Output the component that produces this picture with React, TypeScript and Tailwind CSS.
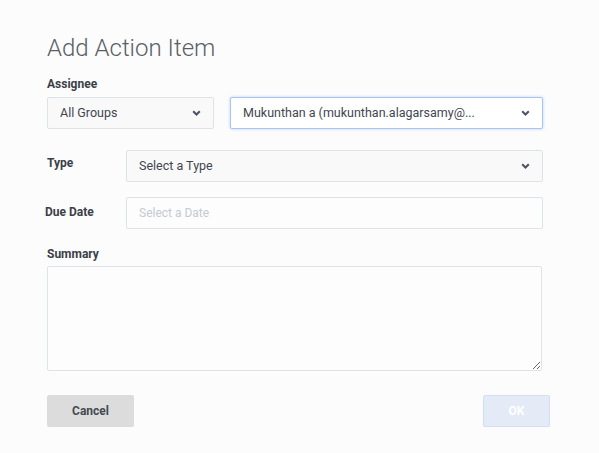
import React from "react";

function Chevron() {
  return (
    <svg width="9" height="6" viewBox="0 0 9 6" className="shrink-0">
      <polyline points="1.2,1.2 4.5,4.5 7.8,1.2" fill="none" stroke="#4a5363" strokeWidth="2" />
    </svg>
  );
}

function Select({ value, focused, className }: { value: string; focused?: boolean; className?: string }) {
  return (
    <div
      className={
        "flex h-[32px] items-center justify-between rounded-[2px] pl-[12px] pr-[12px] text-[12.5px] text-[#3f4650] " +
        (focused
          ? "border border-[#a9c4f5] bg-white shadow-[0_0_3px_rgba(120,160,240,0.5)] "
          : "border border-[#dfe3e8] bg-[#f9f9f9] ") +
        (className ?? "")
      }
    >
      <span className="truncate">{value}</span>
      <Chevron />
    </div>
  );
}

export default function App() {
  return (
    <div className="min-h-[453px] w-[599px] bg-[#fcfcfc] font-['Roboto',sans-serif]">
      <div className="w-[543px] pl-[47px] pt-[34px]">
        <h1 className="text-[24px] leading-[28px] font-light text-[#5a5f66]">Add Action Item</h1>

        <div className="mt-[15px] text-[12px] leading-[14px] font-bold text-[#3b4048]">Assignee</div>
        <div className="mt-[6px] flex gap-[16px]">
          <Select value="All Groups" className="w-[167px]" />
          <Select value="Mukunthan a (mukunthan.alagarsamy@..." focused className="flex-1" />
        </div>

        <div className="mt-[21px] flex">
          <div className="w-[79px] pt-[6px] text-[12px] leading-[14px] font-bold text-[#3b4048]">Type</div>
          <Select value="Select a Type" className="flex-1" />
        </div>

        <div className="mt-[15px] flex">
          <div className="-ml-[2px] w-[81px] pt-[8px] text-[12px] leading-[14px] font-bold text-[#3b4048]">Due Date</div>
          <input
            placeholder="Select a Date"
            className="h-[32px] flex-1 rounded-[2px] border border-[#dfe3e8] bg-[#fdfdfd] pl-[12px] text-[12px] text-[#3f4650] outline-none placeholder:text-[#c3cad3]"
          />
        </div>

        <div className="mt-[18px] text-[12px] leading-[14px] font-bold text-[#3b4048]">Summary</div>
        <textarea className="mt-[5px] block h-[105px] w-[495px] rounded-[2px] border border-[#dfe3e8] bg-[#fdfdfd] outline-none" />

        <div className="mt-[23px] flex w-[503px] items-center justify-between">
          <button className="h-[32px] w-[87px] rounded-[2px] bg-[#dcdcdc] text-[12px] font-bold text-[#444a52]">
            Cancel
          </button>
          <button className="mt-[1px] h-[32px] w-[67px] rounded-[2px] border border-[#d3def2] bg-[#e4ebf7] text-[12px] font-bold text-white">
            OK
          </button>
        </div>
      </div>
    </div>
  );
}
